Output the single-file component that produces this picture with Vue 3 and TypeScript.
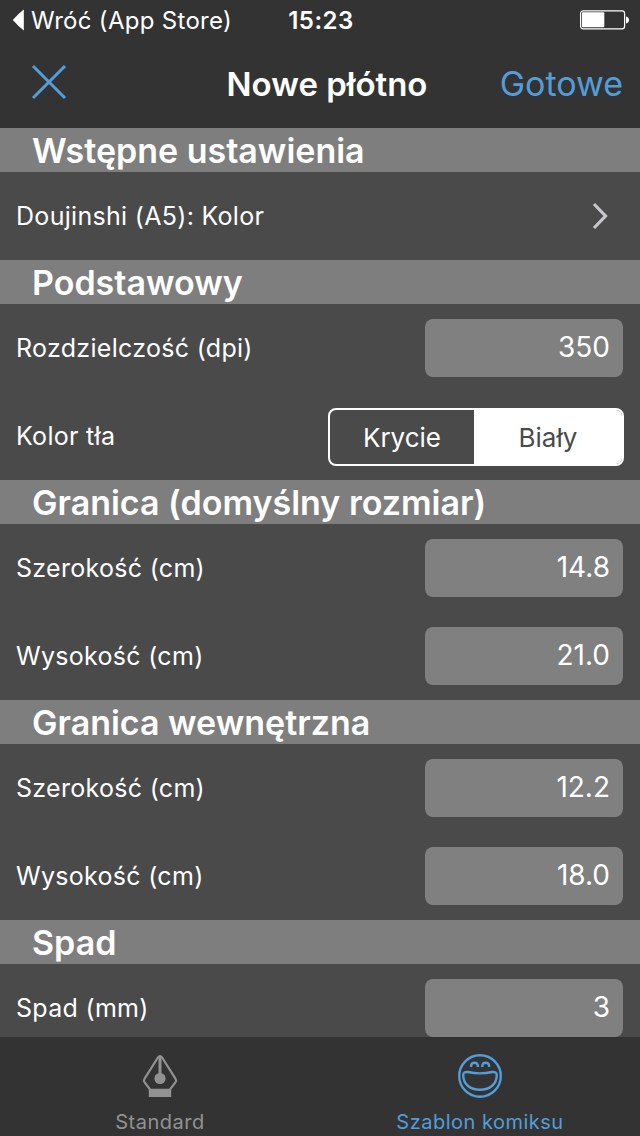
<script setup lang="ts">
import { ref } from 'vue'

interface Row {
  label: string
  kind: 'link' | 'field' | 'segment'
  value?: string
}
interface Section {
  title: string
  rows: Row[]
}

const sections = ref<Section[]>([
  { title: 'Wstępne ustawienia', rows: [{ label: 'Doujinshi (A5): Kolor', kind: 'link' }] },
  {
    title: 'Podstawowy',
    rows: [
      { label: 'Rozdzielczość (dpi)', kind: 'field', value: '350' },
      { label: 'Kolor tła', kind: 'segment' },
    ],
  },
  {
    title: 'Granica (domyślny rozmiar)',
    rows: [
      { label: 'Szerokość (cm)', kind: 'field', value: '14.8' },
      { label: 'Wysokość (cm)', kind: 'field', value: '21.0' },
    ],
  },
  {
    title: 'Granica wewnętrzna',
    rows: [
      { label: 'Szerokość (cm)', kind: 'field', value: '12.2' },
      { label: 'Wysokość (cm)', kind: 'field', value: '18.0' },
    ],
  },
  { title: 'Spad', rows: [{ label: 'Spad (mm)', kind: 'field', value: '3' }] },
])
const background = ref<'Krycie' | 'Biały'>('Biały')
const tab = ref<'standard' | 'comic'>('comic')
</script>

<template>
  <div class="screen">
    <header class="status">
      <div class="back">
        <svg width="12" height="22" viewBox="0 0 12 22"><path d="M11.8 0.6V21.4Q6 17 .8 11Q6 5 11.8 .6Z" fill="#fff" /></svg>
        <span class="back-text">Wróć (App Store)</span>
      </div>
      <span class="time">15:23</span>
      <svg class="battery" width="50" height="20" viewBox="0 0 50 20">
        <rect x=".6" y=".8" width="44" height="18" rx="2.6" fill="none" stroke="#fff" stroke-width="1.2" />
        <rect x="2" y="2.3" width="22.3" height="15" rx="1" fill="#fff" />
        <path d="M46 6.6Q49 7.2 49 10T46 13.4Z" fill="#fff" />
      </svg>
    </header>
    <nav class="nav">
      <button class="close" aria-label="Zamknij">
        <svg width="36" height="36" viewBox="0 0 36 36"><path d="M2 2L34 34M34 2L2 34" fill="none" stroke="#539dd8" stroke-width="3" /></svg>
      </button>
      <h1 class="title">Nowe płótno</h1>
      <button class="done">Gotowe</button>
    </nav>

    <main class="content">
      <section v-for="section in sections" :key="section.title">
        <h2 class="heading">{{ section.title }}</h2>
        <div v-for="row in section.rows" :key="row.label" class="row">
          <span class="label">{{ row.label }}</span>
          <svg v-if="row.kind === 'link'" class="chevron" width="18" height="28" viewBox="0 0 18 28">
            <path d="M2 2L13.5 14L2 26" fill="none" stroke="#c7c7cc" stroke-width="3.2" />
          </svg>
          <div v-else-if="row.kind === 'field'" class="field">{{ row.value }}</div>
          <div v-else class="segment">
            <button class="option first" :class="{ on: background === 'Krycie' }" @click="background = 'Krycie'">Krycie</button>
            <button class="option" :class="{ on: background === 'Biały' }" @click="background = 'Biały'">Biały</button>
          </div>
        </div>
      </section>
    </main>

    <footer class="tabs">
      <button class="tab" :class="{ active: tab === 'standard' }" @click="tab = 'standard'">
        <svg width="44" height="46" viewBox="0 0 44 46" fill="none" stroke="currentColor">
          <path d="M11.5 35.5L4.8 27.5Q3.9 26.2 4.8 24.6L19.8 3Q22 .5 24.2 3L39.2 24.6Q40.1 26.2 39.2 27.5L32.5 35.5Z" transform="translate(2 1.4) scale(.91 1)" stroke-width="2.3" stroke-linejoin="round" />
          <path d="M22 4V23" stroke-width="3" />
          <circle cx="22" cy="25.5" r="5.6" fill="currentColor" stroke="none" />
          <path d="M10.8 36H33.2V44H10.8Z" fill="currentColor" stroke="none" />
        </svg>
        <span class="tab-label">Standard</span>
      </button>
      <button class="tab" :class="{ active: tab === 'comic' }" @click="tab = 'comic'">
        <svg width="44" height="46" viewBox="0 0 44 46" fill="none" stroke="currentColor" stroke-width="2.4">
          <circle cx="22" cy="23" r="20.8" />
          <path d="M13 14Q13 9.8 16.5 9.8T20 14M24.2 14Q24.2 9.8 27.7 9.8T31.2 14" />
          <path d="M10 19Q22 21.8 34 19Q38.8 18.5 38.8 22C38.8 31 32 36.8 22 36.8S5.2 31 5.2 22Q5.2 18.5 10 19Z" />
        </svg>
        <span class="tab-label">Szablon komiksu</span>
      </button>
    </footer>
  </div>
</template>

<style>
body {
  background: #333;
}
</style>

<style scoped>
.screen {
  width: 640px;
  height: 1136px;
  display: flex;
  flex-direction: column;
  overflow: hidden;
  background: #4a4a4a;
  color: #fff;
  font-family: Inter, 'Noto Sans', sans-serif;
}
button {
  padding: 0;
  border: 0;
  background: none;
  font-family: inherit;
  color: inherit;
}
svg {
  display: block;
  flex: none;
}
.status {
  flex: none;
  height: 40px;
  display: grid;
  grid-template-columns: 1fr auto 1fr;
  align-items: center;
  padding: 0 10px 0 12px;
  background: #333;
  white-space: nowrap;
}
.back {
  display: flex;
  align-items: center;
  gap: 7px;
  font-size: 24px;
  letter-spacing: 0.3px;
}
.time {
  font-size: 24px;
  font-weight: 600;
  letter-spacing: 0.5px;
}
.battery {
  justify-self: end;
}
.nav {
  flex: none;
  height: 88px;
  display: grid;
  grid-template-columns: 1fr auto 1fr;
  align-items: center;
  padding: 0 17px 0 31px;
  background: #333;
}
.close {
  width: 36px;
  height: 36px;
  margin-top: -5px;
}
.title {
  margin: 0;
  font-size: 33px;
  line-height: 40px;
  font-weight: 600;
}
.done {
  justify-self: end;
  color: #539dd8;
  font-size: 34px;
  line-height: 40px;
}
.content {
  flex: 1;
  min-height: 0;
  overflow: hidden;
}
.heading {
  height: 44px;
  margin: 0;
  padding-left: 32px;
  background: #7e7e7e;
  font-size: 34px;
  line-height: 46px;
  font-weight: 600;
  white-space: nowrap;
}
.row {
  height: 88px;
  display: flex;
  align-items: center;
  justify-content: space-between;
  padding: 0 16px;
  box-sizing: border-box;
}
.label {
  font-size: 25px;
  letter-spacing: 0.3px;
}
.chevron {
  margin-right: 14px;
}
.field {
  width: 198px;
  height: 58px;
  margin-right: 1px;
  padding-right: 13px;
  box-sizing: border-box;
  border-radius: 8px;
  background: #808080;
  font-size: 28px;
  line-height: 57px;
  text-align: right;
}
.segment {
  width: 296px;
  height: 58px;
  margin-top: 2px;
  box-sizing: border-box;
  display: flex;
  border: 2px solid #fff;
  border-radius: 8px;
  overflow: hidden;
}
.option {
  flex: 1;
  font-size: 26px;
}
.option.first {
  flex: 0 0 144px;
}
.option.on {
  background: #fff;
  color: #4a4a4a;
}
.tabs {
  flex: none;
  height: 99px;
  display: flex;
  background: #333;
}
.tab {
  flex: 1;
  display: flex;
  flex-direction: column;
  align-items: center;
  padding-top: 16px;
  color: #929292;
}
.tab.active {
  color: #539dd8;
}
.tab-label {
  margin-top: 11px;
  font-size: 20px;
  line-height: 24px;
  letter-spacing: 0.5px;
}
</style>
